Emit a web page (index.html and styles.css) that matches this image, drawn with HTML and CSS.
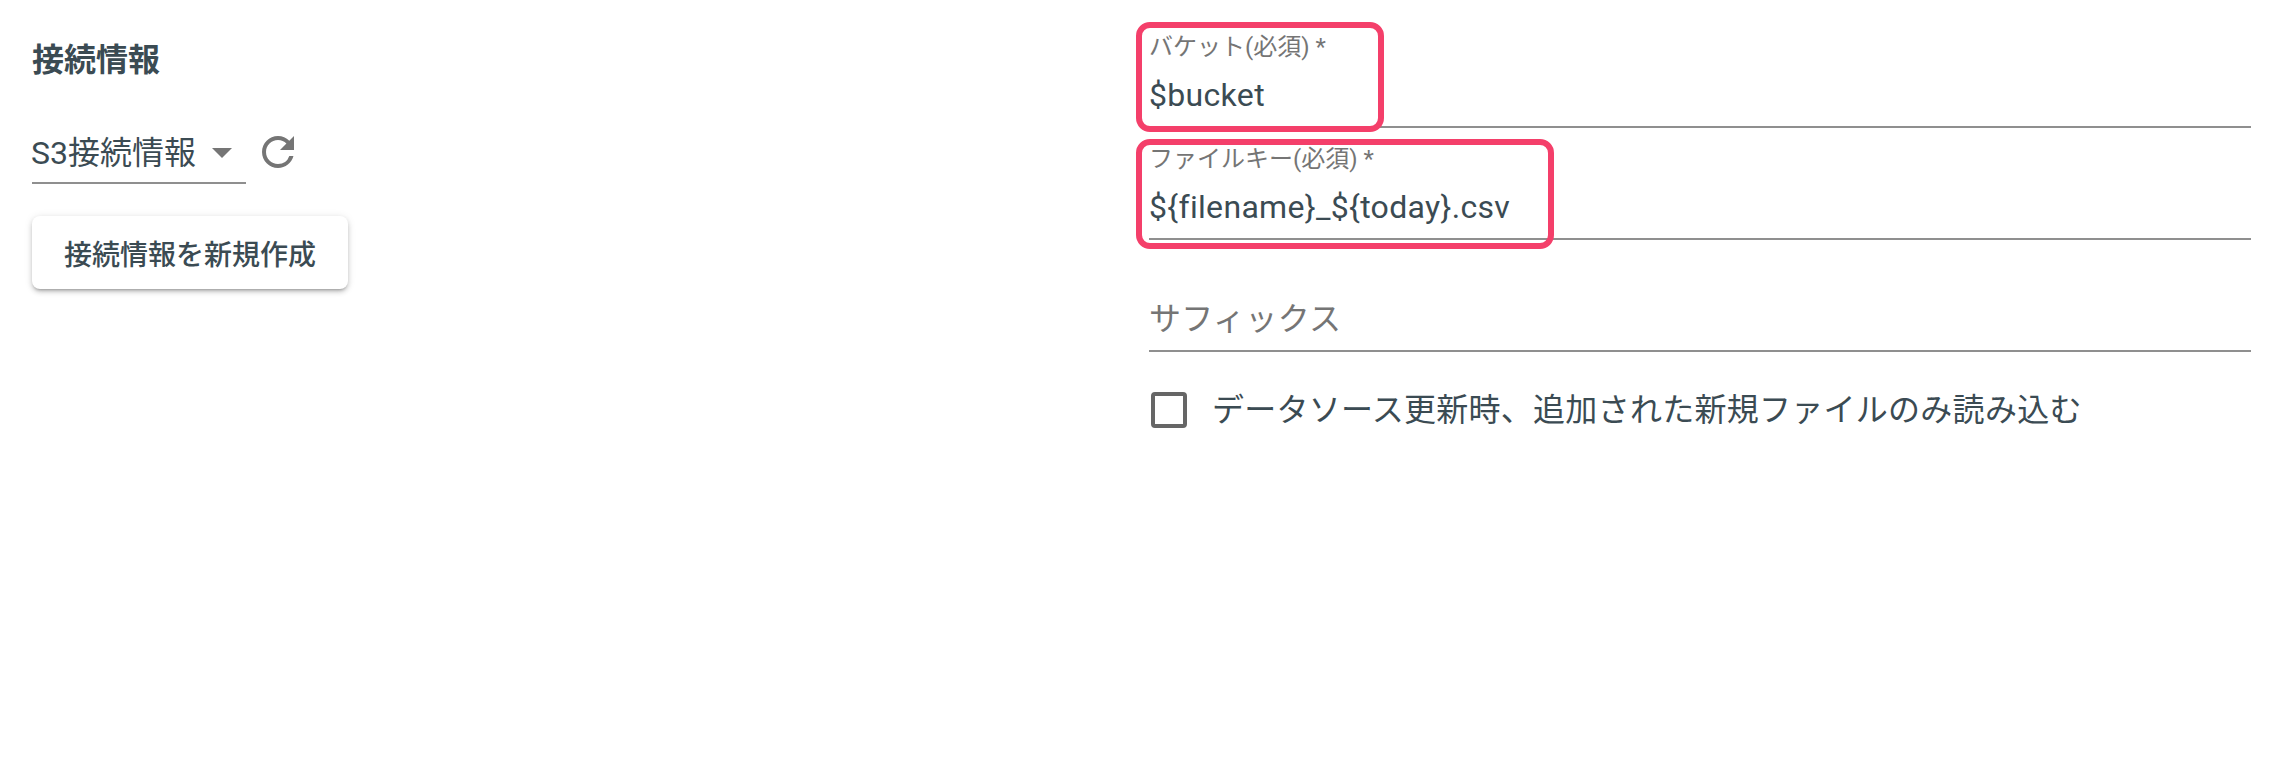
FILE: index.html
```html
<!DOCTYPE html>
<html lang="ja">
<head>
<meta charset="utf-8">
<title>接続情報</title>
<link rel="stylesheet" href="styles.css">
</head>
<body>
<main class="page">
  <section class="left">
    <h2 class="title">接続情報</h2>
    <div class="select-row">
      <div class="select">
        <span class="select-value">S3接続情報</span>
        <svg class="caret" viewBox="0 0 20 10" width="20" height="10"><path d="M0 0h20L10 10z"/></svg>
      </div>
      <svg class="refresh" viewBox="0 0 24 24" width="48" height="48"><path d="M17.65 6.35A7.958 7.958 0 0 0 12 4c-4.42 0-7.99 3.58-7.99 8s3.57 8 7.99 8c3.73 0 6.84-2.55 7.73-6h-2.08A5.99 5.99 0 0 1 12 18c-3.31 0-6-2.69-6-6s2.69-6 6-6c1.66 0 3.14.69 4.22 1.78L13 11h7V4l-2.35 2.35z"/></svg>
    </div>
    <button class="btn">接続情報を新規作成</button>
  </section>
  <section class="right">
    <div class="field">
      <label class="field-label">バケット(必須) *</label>
      <div class="field-value">$bucket</div>
      <span class="mark mark-a"></span>
    </div>
    <div class="field">
      <label class="field-label">ファイルキー(必須) *</label>
      <div class="field-value">${filename}_${today}.csv</div>
      <span class="mark mark-b"></span>
    </div>
    <div class="field">
      <div class="field-value placeholder">サフィックス</div>
    </div>
    <label class="check">
      <span class="box"></span>
      <span class="check-label">データソース更新時、追加された新規ファイルのみ読み込む</span>
    </label>
  </section>
</main>
</body>
</html>
```
FILE: styles.css
```css
* { box-sizing: border-box; }
html, body { margin: 0; height: 100%; background: #fff; }
body {
  font-family: Roboto, "Noto Sans CJK JP", sans-serif;
  color: #3b4b53;
  overflow: hidden;
}
.page { display: flex; height: 762px; }
.left { width: 1149px; padding: 38px 0 0 32px; flex: none; }
.title { margin: 0; font-size: 32px; font-weight: 700; line-height: 44px; }
.select-row { display: flex; align-items: flex-start; margin-top: 36px; }
.select {
  width: 214px; height: 66px;
  display: flex; align-items: center;
  border-bottom: 2px solid #8f8f8f;
  padding-top: 6px;
}
.select-value { font-size: 32px; line-height: 44px; margin-left: -1px; }
.caret { fill: #757575; margin-left: 16px; }
.refresh { fill: #757575; margin: 10px 0 0 8px; }
.btn {
  display: block;
  margin-top: 32px;
  width: 316px; height: 73px;
  border: 0; border-radius: 8px;
  background: #fff;
  color: #3b4b53;
  font: 500 28px Roboto, "Noto Sans CJK JP", sans-serif;
  box-shadow: 0 3px 3px -2px rgba(0,0,0,.25), 0 3px 5px 0 rgba(0,0,0,.16), 0 1px 8px 0 rgba(0,0,0,.1);
}
.right { width: 1102px; padding-top: 16px; flex: none; }
.field {
  position: relative;
  height: 112px;
  border-bottom: 2px solid #8f8f8f;
  padding: 15px 0 0;
}
.field-label { display: block; font-size: 24px; line-height: 32px; color: #757575; }
.field-value { font-size: 32px; line-height: 44px; margin-top: 10px; letter-spacing: .32px; }
.placeholder { color: #757575; margin-top: 42px; }
.mark {
  position: absolute;
  left: -13px; top: 6px;
  height: 110px;
  border: 6px solid #f43f6a;
  border-radius: 14px;
  pointer-events: none;
}
.mark-a { width: 248px; }
.mark-b { width: 418px; top: 11px; }
.check { display: flex; align-items: center; margin: 36px 0 0 2px; }
.box { width: 36px; height: 36px; border: 4px solid #666; border-radius: 4px; flex: none; }
.check-label { font-size: 32px; line-height: 44px; margin-left: 25px; letter-spacing: .27px; }
```
